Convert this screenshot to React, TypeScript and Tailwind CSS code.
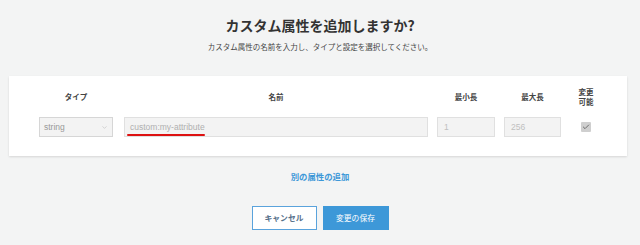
import { Check, ChevronDown } from "lucide-react";

const FONT = {
  fontFamily: '"Noto Sans CJK JP", "Noto Sans", "Liberation Sans", sans-serif',
};

function HeaderCell({ className, children }: { className: string; children: React.ReactNode }) {
  return (
    <div className={`flex items-center justify-center text-center text-[7.5px] font-bold leading-[10px] text-[#444] ${className}`}>
      {children}
    </div>
  );
}

export default function App() {
  return (
    <div className="h-[245px] w-[640px] overflow-hidden bg-[#f3f4f4]" style={FONT}>
      <div className="pt-[15px] text-center">
        <h1 className="text-[14px] font-bold leading-[20px] text-[#333]">
          カスタム属性を追加しますか?
        </h1>
        <p className="mt-[6px] text-[7.5px] leading-[12px] text-[#444]">
          カスタム属性の名前を入力し、タイプと設定を選択してください。
        </p>
      </div>

      <div className="ml-[9px] mt-[23px] h-[80px] w-[618px] bg-white pl-[30px] pt-[10px] shadow-[0_1px_2px_rgba(0,0,0,0.12)]">
        <div className="flex h-[22px] items-stretch">
          <HeaderCell className="w-[74px]">タイプ</HeaderCell>
          <HeaderCell className="ml-[11px] w-[304px]">名前</HeaderCell>
          <HeaderCell className="ml-[9px] w-[58px]">最小長</HeaderCell>
          <HeaderCell className="ml-[9px] w-[57px]">最大長</HeaderCell>
          <HeaderCell className="ml-[10px] w-[30px]">
            変更
            <br />
            可能
          </HeaderCell>
        </div>

        <div className="mt-[9px] flex h-[20px] items-stretch font-['Liberation_Sans',sans-serif]">
          <div className="flex w-[74px] items-center justify-between border border-[#d6d6d6] bg-[#f3f3f3] pl-[4px] pr-[4px] text-[8.5px] text-[#999]">
            <span>string</span>
            <ChevronDown size={7} strokeWidth={1.5} className="text-[#aaa]" />
          </div>
          <div className="relative ml-[11px] flex w-[304px] items-center border border-[#e0e0e0] bg-[#f3f3f3] pl-[5px] text-[8.5px] text-[#b0b0b0]">
            <span>custom:my-attribute</span>
            <span className="absolute left-[2px] top-[16px] h-[2px] w-[78px] rounded-full bg-[#dd1111]" />
          </div>
          <div className="ml-[9px] flex w-[58px] items-center border border-[#e0e0e0] bg-[#f3f3f3] pl-[6px] text-[8.5px] text-[#c0c0c0]">
            1
          </div>
          <div className="ml-[9px] flex w-[57px] items-center border border-[#e0e0e0] bg-[#f3f3f3] pl-[6px] text-[8.5px] text-[#c0c0c0]">
            256
          </div>
          <div className="ml-[10px] flex w-[30px] items-center justify-center">
            <span className="flex h-[10px] w-[10px] items-center justify-center rounded-[1px] bg-[#cfcfcf]">
              <Check size={8} strokeWidth={3} className="text-[#6f6f6f]" />
            </span>
          </div>
        </div>
      </div>

      <div className="mt-[14px] text-center text-[8.4px] font-bold leading-[12px] text-[#3d98d8]">
        別の属性の追加
      </div>

      <div className="mt-[24px] flex justify-center gap-[6px]">
        <button className="h-[24px] w-[65px] border-[1.5px] border-[#5aa3dc] bg-white text-[7.8px] font-bold text-[#56708a]">
          キャンセル
        </button>
        <button className="h-[24px] w-[66px] bg-[#3d98d8] text-[7.8px] text-white">
          変更の保存
        </button>
      </div>
    </div>
  );
}
